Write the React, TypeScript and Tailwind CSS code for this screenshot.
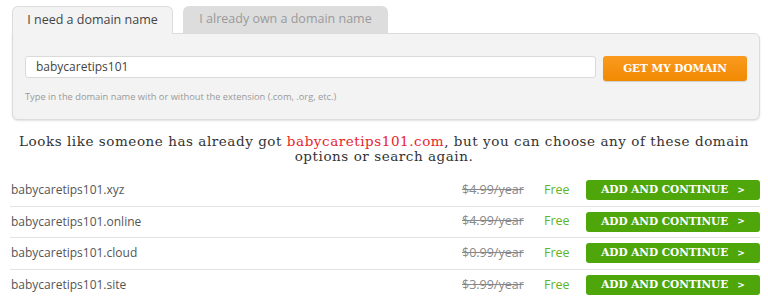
const rows = [
  { name: "babycaretips101.xyz", price: "$4.99/year" },
  { name: "babycaretips101.online", price: "$4.99/year" },
  { name: "babycaretips101.cloud", price: "$0.99/year" },
  { name: "babycaretips101.site", price: "$3.99/year" },
];

export default function App() {
  return (
    <div className="h-[296px] w-[768px] overflow-hidden bg-white font-['Open_Sans',sans-serif]">
      <div className="pl-[12px] pr-[8px] pt-[6px]">
        <div className="flex items-end gap-[10px]">
          <div className="relative z-10 -mb-px flex h-[28px] w-[161px] items-center justify-center rounded-t-[6px] border border-b-0 border-[#dcdcdc] bg-[#f3f3f3] text-[12.5px] text-[#444]">
            I need a domain name
          </div>
          <div className="flex h-[27px] w-[205px] items-center justify-center rounded-t-[6px] bg-[#dddddd] text-[12.5px] text-[#9a9a9a]">
            I already own a domain name
          </div>
        </div>
        <div className="h-[87px] rounded-b-[6px] rounded-tr-[6px] border border-[#dcdcdc] bg-[#f3f3f3] px-[12px] pt-[22px] shadow-[0_1px_2px_rgba(0,0,0,0.12)]">
          <div className="flex items-start gap-[7px]">
            <div className="flex h-[22px] w-[571px] items-center rounded-[3px] border border-[#dadada] bg-white pl-[10px] text-[12px] text-[#444]">
              babycaretips101
            </div>
            <button
              type="button"
              className="h-[25px] w-[144px] rounded-[3px] bg-gradient-to-b from-[#fa9a1c] to-[#f08a00] font-['DejaVu_Serif',serif] text-[10.5px] font-bold text-white shadow-[0_1px_1px_rgba(0,0,0,0.15)]"
            >
              GET MY DOMAIN
            </button>
          </div>
          <p className="mt-[9px] text-[9.3px] text-[#999]">
            Type in the domain name with or without the extension (.com, .org, etc.)
          </p>
        </div>
      </div>

      <p className="mt-[14px] px-[10px] text-center font-['DejaVu_Serif',serif] text-[13.5px] leading-[15px] tracking-[0.55px] text-[#333]">
        Looks like someone has already got <span className="text-[#e8242a]">babycaretips101.com</span>, but you can
        choose any of these domain
        <br />
        options or search again.
      </p>

      <div className="mx-[10px] mt-[11px] w-[750px]">
        {rows.map((row, index) => (
          <div
            key={row.name}
            className={
              index < rows.length - 1
                ? "flex h-[31.5px] items-center border-b border-[#e2e2e2]"
                : "flex h-[31.5px] items-center"
            }
          >
            <span className="flex-1 pl-px text-[12px] text-[#555]">{row.name}</span>
            <span className="w-[64px] text-[12.5px] text-[#888] line-through">{row.price}</span>
            <span className="ml-[18px] w-[42px] text-[12.5px] text-[#5fb526]">Free</span>
            <button
              type="button"
              className="flex h-[20px] w-[174px] items-center justify-center gap-[9px] rounded-[3px] bg-[#4ea60a] font-['DejaVu_Serif',serif] text-[10.5px] font-bold text-white"
            >
              ADD AND CONTINUE <span className="text-[9px]">&gt;</span>
            </button>
          </div>
        ))}
      </div>
    </div>
  );
}
